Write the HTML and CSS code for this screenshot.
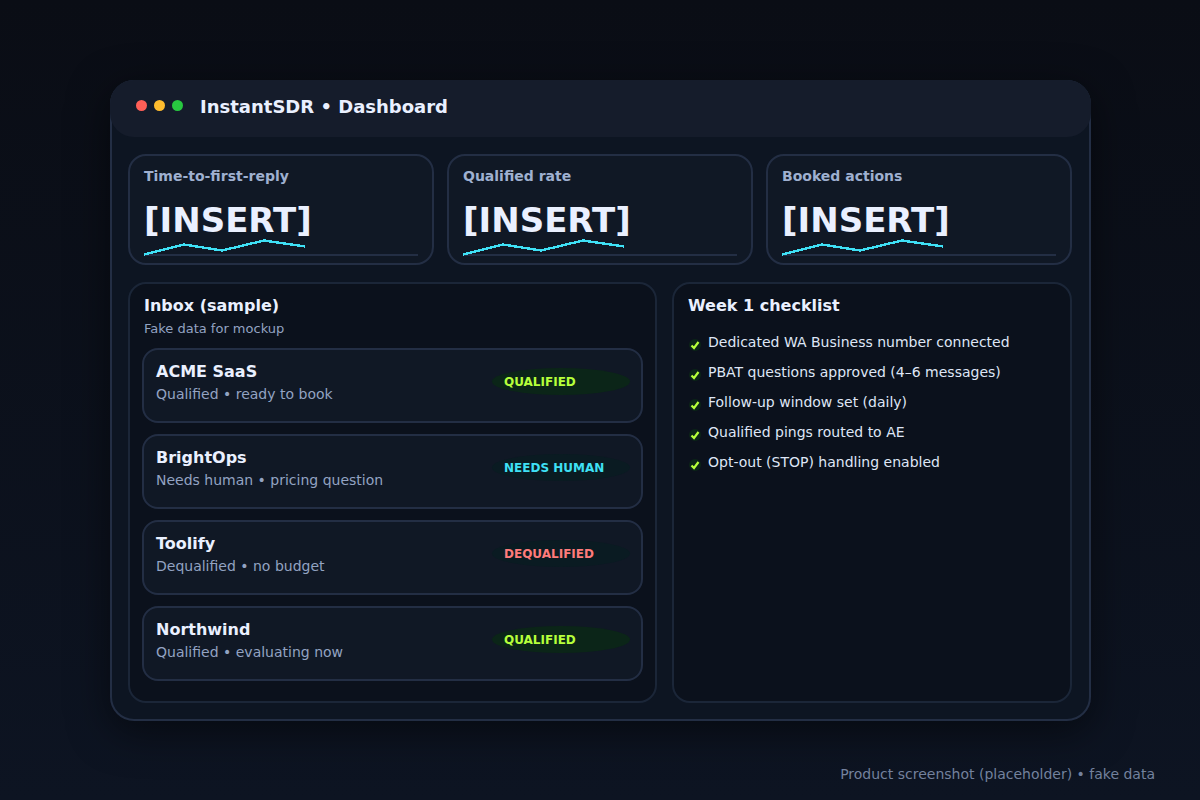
FILE: index.html
```html
<!DOCTYPE html>
<html lang="en">
<head>
    <meta charset="UTF-8">
    <meta name="viewport" content="width=device-width, initial-scale=1.0">
    <title>InstantSDR • Dashboard</title>
    <link rel="stylesheet" href="styles.css">
</head>
<body>
    <!-- Shared icons -->
    <svg class="icon-defs" aria-hidden="true">
        <symbol id="sparkline" overflow="visible">
            <line class="spark-base" x1="0" y1="15" x2="100%" y2="15" />
            <polyline class="spark-line" points="0,14.5 40,4.5 78,10.5 120,0.5 161,6.5" />
        </symbol>
        <symbol id="check" viewBox="0 0 14 14">
            <circle class="check-disc" cx="7" cy="7" r="6" />
            <path class="check-mark" d="M3.5 7.5 L6 10 L10.5 4" />
        </symbol>
    </svg>

    <main class="window">
        <header class="window-header">
            <div class="dots">
                <span class="dot dot-red"></span>
                <span class="dot dot-yellow"></span>
                <span class="dot dot-green"></span>
            </div>
            <h1 class="window-title">InstantSDR • Dashboard</h1>
        </header>

        <div class="window-body">
            <!-- KPI cards -->
            <section class="kpis">
                <article class="kpi">
                    <h2 class="kpi-label">Time-to-first-reply</h2>
                    <p class="kpi-value">[INSERT]</p>
                    <svg class="sparkline"><use href="#sparkline" /></svg>
                </article>
                <article class="kpi">
                    <h2 class="kpi-label">Qualified rate</h2>
                    <p class="kpi-value">[INSERT]</p>
                    <svg class="sparkline"><use href="#sparkline" /></svg>
                </article>
                <article class="kpi">
                    <h2 class="kpi-label">Booked actions</h2>
                    <p class="kpi-value">[INSERT]</p>
                    <svg class="sparkline"><use href="#sparkline" /></svg>
                </article>
            </section>

            <div class="panels">
                <!-- Inbox -->
                <section class="panel">
                    <div class="panel-head">
                        <h2 class="panel-title">Inbox (sample)</h2>
                        <p class="panel-sub">Fake data for mockup</p>
                    </div>
                    <ul class="inbox">
                        <li class="lead">
                            <div>
                                <h3 class="lead-name">ACME SaaS</h3>
                                <p class="lead-note">Qualified • ready to book</p>
                            </div>
                            <span class="badge badge-qualified">QUALIFIED</span>
                        </li>
                        <li class="lead">
                            <div>
                                <h3 class="lead-name">BrightOps</h3>
                                <p class="lead-note">Needs human • pricing question</p>
                            </div>
                            <span class="badge badge-human">NEEDS HUMAN</span>
                        </li>
                        <li class="lead">
                            <div>
                                <h3 class="lead-name">Toolify</h3>
                                <p class="lead-note">Dequalified • no budget</p>
                            </div>
                            <span class="badge badge-dequalified">DEQUALIFIED</span>
                        </li>
                        <li class="lead">
                            <div>
                                <h3 class="lead-name">Northwind</h3>
                                <p class="lead-note">Qualified • evaluating now</p>
                            </div>
                            <span class="badge badge-qualified">QUALIFIED</span>
                        </li>
                    </ul>
                </section>

                <!-- Checklist -->
                <section class="panel">
                    <div class="panel-head">
                        <h2 class="panel-title">Week 1 checklist</h2>
                    </div>
                    <ul class="checklist">
                        <li><svg class="check"><use href="#check" /></svg>Dedicated WA Business number connected</li>
                        <li><svg class="check"><use href="#check" /></svg>PBAT questions approved (4–6 messages)</li>
                        <li><svg class="check"><use href="#check" /></svg>Follow-up window set (daily)</li>
                        <li><svg class="check"><use href="#check" /></svg>Qualified pings routed to AE</li>
                        <li><svg class="check"><use href="#check" /></svg>Opt-out (STOP) handling enabled</li>
                    </ul>
                </section>
            </div>
        </div>
    </main>

    <footer class="footnote">Product screenshot (placeholder) • fake data</footer>
</body>
</html>
```
FILE: styles.css
```css
* {
    margin: 0;
    padding: 0;
    box-sizing: border-box;
}

body {
    min-height: 100vh;
    padding-top: 80px;
    background: linear-gradient(#0a0d15, #0d1422);
    color: #eaf0ff;
    font-family: 'DejaVu Sans', Verdana, sans-serif;
    font-size: 14px;
    line-height: 20px;
}

ul {
    list-style: none;
}

.icon-defs {
    position: absolute;
    width: 0;
    height: 0;
}

/* Window */
.window {
    margin: 0 109px 0 110px;
    background-color: #0d1522;
    border: 2px solid #232e44;
    border-radius: 24px;
    box-shadow: 0 10px 40px rgba(0, 0, 0, 0.5);
}

.window-header {
    display: flex;
    align-items: flex-start;
    gap: 17px;
    height: 57px;
    margin: -2px -2px 0;
    padding: 15px 26px;
    background-color: #151c2b;
    border-radius: 24px;
}

.dots {
    display: flex;
    gap: 7px;
    padding-top: 5px;
}

.dot {
    width: 11px;
    height: 11px;
    border-radius: 50%;
}

.dot-red {
    background-color: #ff5f57;
}

.dot-yellow {
    background-color: #febc2e;
}

.dot-green {
    background-color: #28c840;
}

.window-title {
    font-size: 18px;
    line-height: 24px;
}

.window-body {
    padding: 17px 17px 16px 16px;
}

/* KPI cards */
.kpis {
    display: grid;
    grid-template-columns: repeat(3, 1fr);
    gap: 13px;
}

.kpi {
    padding: 10px 14px 7px;
    background-color: #101825;
    border: 2px solid #232e44;
    border-radius: 18px;
}

.kpi-label {
    color: #9fb0d0;
    font-size: 14px;
}

.kpi-value {
    margin-top: 14px;
    font-size: 34px;
    font-weight: bold;
    line-height: 40px;
}

.sparkline {
    display: block;
    width: 100%;
    height: 16px;
    overflow: visible;
    shape-rendering: crispEdges;
}

.spark-base {
    stroke: #232e44;
    stroke-width: 2;
}

.spark-line {
    fill: none;
    stroke: #3fe0f5;
    stroke-width: 2.4;
}

/* Panels */
.panels {
    display: grid;
    grid-template-columns: 529fr 400fr;
    gap: 15px;
    margin-top: 17px;
}

.panel {
    padding: 12px 12px 20px;
    background-color: #0b111c;
    border: 2px solid #1b2638;
    border-radius: 18px;
}

.panel-head {
    padding: 0 2px;
}

.panel-title {
    font-size: 16px;
}

.panel-sub {
    margin-top: 3px;
    color: #93a3c2;
    font-size: 13px;
}

/* Inbox */
.inbox {
    display: grid;
    gap: 11px;
    margin-top: 9px;
}

.lead {
    display: flex;
    justify-content: space-between;
    align-items: flex-start;
    padding: 12px 11px 17px 12px;
    background-color: #101825;
    border: 2px solid #232e44;
    border-radius: 16px;
}

.lead-name {
    font-size: 16px;
}

.lead-note {
    margin-top: 2px;
    color: #93a3c2;
}

.badge {
    width: 138px;
    margin-top: 6px;
    padding: 2px 0 0 12px;
    border-radius: 50%;
    font-size: 12px;
    font-weight: bold;
    line-height: 25px;
}

.badge-qualified {
    background-color: #0b2518;
    color: #b6ff3b;
}

.badge-human {
    background-color: #0a1b22;
    color: #3fe0f5;
}

.badge-dequalified {
    background-color: #0a1b22;
    color: #ff7b7b;
}

/* Checklist */
.checklist {
    margin-top: 11px;
    padding: 0 2px;
}

.checklist li {
    display: flex;
    align-items: center;
    gap: 6px;
    color: #dfe6f6;
    line-height: 30px;
}

.check {
    flex: none;
    width: 14px;
    height: 14px;
    margin-top: 5px;
}

.check-disc {
    fill: #0b2518;
}

.check-mark {
    fill: none;
    stroke: #b6ff3b;
    stroke-width: 2.2;
}

.footnote {
    margin: 43px 45px 16px;
    color: #73819d;
    text-align: right;
}
```
